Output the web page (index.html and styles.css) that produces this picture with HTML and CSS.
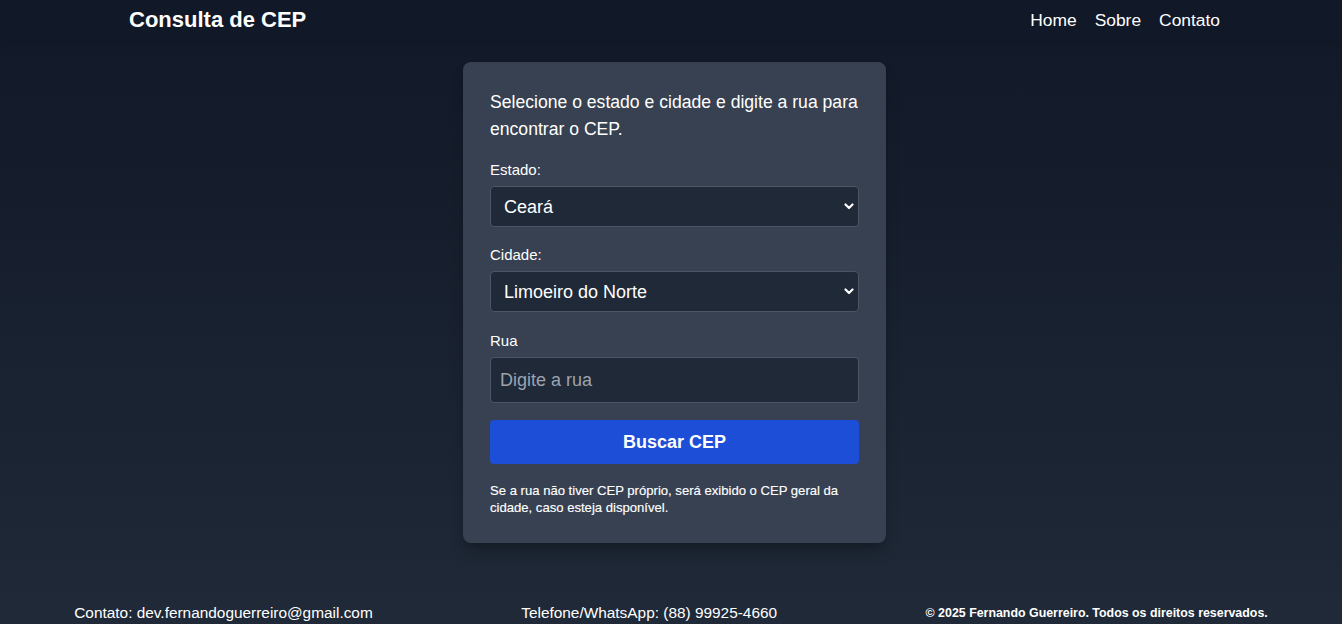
FILE: index.html
```html
<!DOCTYPE html>
<html lang="pt-BR">
<head>
<meta charset="utf-8">
<title>Consulta de CEP</title>
<link rel="stylesheet" href="styles.css">
</head>
<body>
<div class="page">
  <header class="topbar">
    <h1 class="brand">Consulta de CEP</h1>
    <nav class="nav">
      <a href="#">Home</a>
      <a href="#">Sobre</a>
      <a href="#">Contato</a>
    </nav>
  </header>
  <main class="main">
    <section class="card">
      <p class="intro">Selecione o estado e cidade e digite a rua para encontrar o CEP.</p>
      <div class="field">
        <label class="label" for="estado">Estado:</label>
        <div class="select-wrap">
          <select id="estado" class="control select"><option>Ceará</option></select>
          <svg class="chev" width="10" height="7" viewBox="0 0 10 7"><path d="M1.5 1.5 L5 5 L8.5 1.5" fill="none" stroke="#fff" stroke-width="2.2" stroke-linecap="round" stroke-linejoin="round"/></svg>
        </div>
      </div>
      <div class="field">
        <label class="label" for="cidade">Cidade:</label>
        <div class="select-wrap">
          <select id="cidade" class="control select"><option>Limoeiro do Norte</option></select>
          <svg class="chev" width="10" height="7" viewBox="0 0 10 7"><path d="M1.5 1.5 L5 5 L8.5 1.5" fill="none" stroke="#fff" stroke-width="2.2" stroke-linecap="round" stroke-linejoin="round"/></svg>
        </div>
      </div>
      <div class="field field-last">
        <label class="label" for="rua">Rua</label>
        <input id="rua" class="control input" type="text" placeholder="Digite a rua">
      </div>
      <button class="btn" type="button">Buscar CEP</button>
      <p class="note">Se a rua não tiver CEP próprio, será exibido o CEP geral da cidade, caso esteja disponível.</p>
    </section>
  </main>
  <footer class="footer">
    <span>Contato: dev.fernandoguerreiro@gmail.com</span>
    <span>Telefone/WhatsApp: (88) 99925-4660</span>
    <span class="copy">© 2025 Fernando Guerreiro. Todos os direitos reservados.</span>
  </footer>
</div>
</body>
</html>
```
FILE: styles.css
```css
* { box-sizing: border-box; }
html, body { margin: 0; padding: 0; }
body {
  font-family: "Liberation Sans", Arial, sans-serif;
  color: #fff;
  background: #111827;
}
.page {
  min-height: 624px;
  display: flex;
  flex-direction: column;
  background: linear-gradient(to bottom, #111827 0%, #1f2937 100%);
}
.topbar {
  height: 41px;
  display: flex;
  align-items: center;
  justify-content: space-between;
  padding: 0 122px 0 129px;
  background: #111827;
  box-shadow: 0 2px 6px rgba(0,0,0,0.12);
}
.brand {
  margin: 0;
  font-size: 22px;
  font-weight: bold;
  line-height: 1;
  margin-top: -2px;
}
.nav {
  display: flex;
  gap: 18px;
  margin-top: -1px;
}
.nav a {
  color: #fff;
  text-decoration: none;
  font-size: 17.4px;
}
.main {
  flex: 1;
  display: flex;
  justify-content: center;
  align-items: flex-start;
  padding: 21px 0 0 7px;
}
.card {
  width: 423px;
  background: #374151;
  border-radius: 8px;
  padding: 27px 27px 27px;
  box-shadow: 0 10px 15px -3px rgba(0,0,0,0.25), 0 4px 6px -4px rgba(0,0,0,0.2);
}
.intro {
  margin: 0 0 16px;
  font-size: 17.6px;
  line-height: 27px;
}
.field { margin-bottom: 17px; }
.field-last { padding-top: 1px; }
.label {
  display: block;
  font-size: 15px;
  line-height: 22px;
  margin-bottom: 5px;
}
.select-wrap { position: relative; }
.control {
  display: block;
  width: 100%;
  font-family: inherit;
  color: #fff;
  background: #1f2937;
  border: 1px solid #4b5563;
  border-radius: 4px;
  outline: none;
}
.select {
  appearance: none;
  -webkit-appearance: none;
  height: 41px;
  font-size: 18px;
  padding: 0 30px 0 13px;
}
.chev {
  position: absolute;
  right: 5px;
  top: 17px;
  pointer-events: none;
}
.input {
  height: 46px;
  font-size: 18px;
  padding: 0 9px;
}
.input::placeholder { color: #9ca3af; }
.btn {
  display: block;
  width: 100%;
  height: 44px;
  border: 0;
  border-radius: 4px;
  background: #1d4ed8;
  color: #fff;
  font-family: inherit;
  font-size: 18px;
  font-weight: bold;
}
.note {
  margin: 18px 0 0;
  font-size: 13.1px;
  line-height: 17px;
  font-weight: 500;
  -webkit-text-stroke: 0.15px #fff;
}
.footer {
  height: 31px;
  display: flex;
  justify-content: space-around;
  align-items: flex-end;
  padding-bottom: 1px;
  background: #1f2937;
  font-size: 15.4px;
  line-height: 20px;
}
.footer .copy {
  font-size: 12.4px;
  font-weight: bold;
  line-height: 20px;
}
```
